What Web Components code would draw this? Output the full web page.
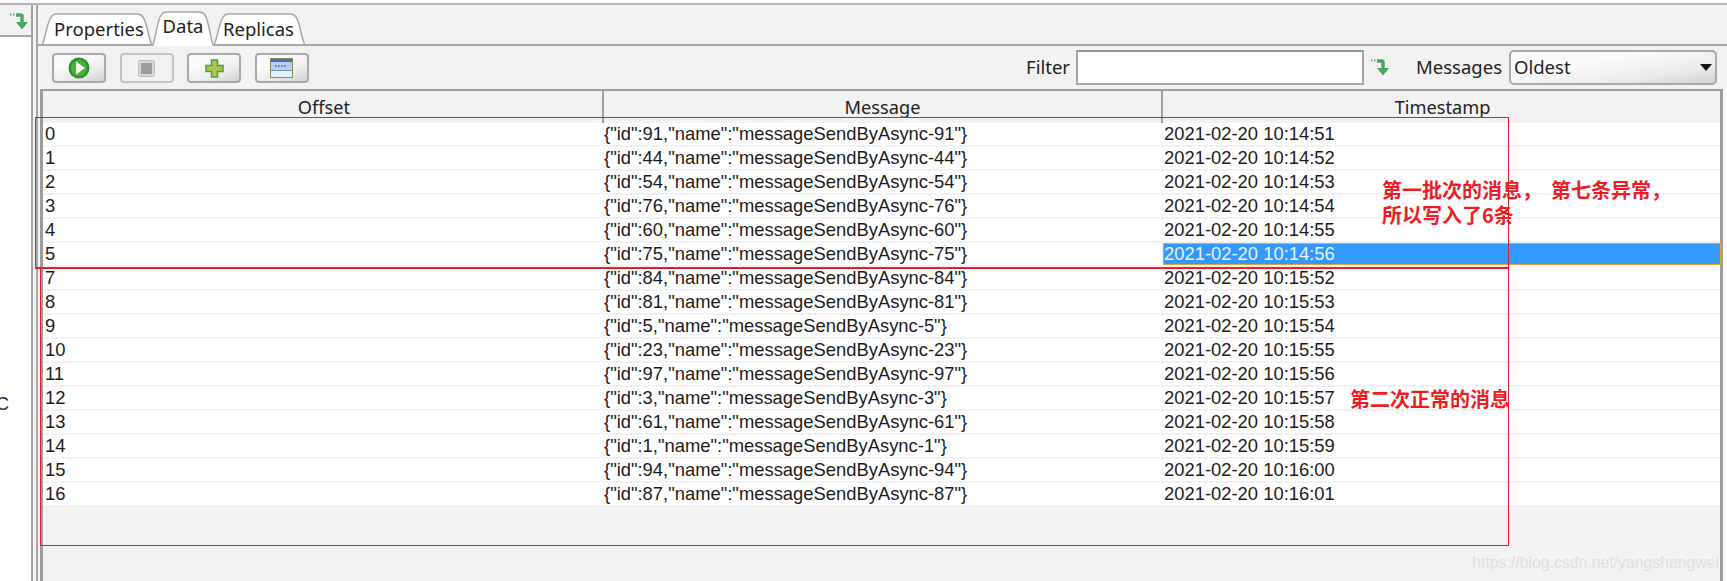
<!DOCTYPE html>
<html lang="zh">
<head>
<meta charset="utf-8">
<title>Data</title>
<style>
  html, body { margin: 0; padding: 0; background: #f2f2f2; overflow: hidden; }
</style>
</head>
<body>
<app-shell>
  <side-panel slot="side">C</side-panel>
  <tab-strip slot="main">
    <tab-item width="110" shift="2">Properties</tab-item>
    <tab-item width="62" active>Data</tab-item>
    <tab-item width="91" shift="-1">Replicas</tab-item>
  </tab-strip>
  <tool-bar slot="main">
    <tool-button icon="play"></tool-button>
    <tool-button icon="stop" disabled></tool-button>
    <tool-button icon="plus"></tool-button>
    <tool-button icon="window"></tool-button>
    <filter-field slot="right"></filter-field>
  </tool-bar>
  <data-table slot="main"></data-table>
  <red-box slot="over" style="left:35px;top:117px;width:1472px;height:149px;border-bottom:2px solid #ee1c25"></red-box>
  <red-box slot="over" style="left:40px;top:268px;width:1467px;height:277px;border-top:0"></red-box>
  <red-note slot="over" style="left:1382px;top:177px;font-size:20px">第一批次的消息，&nbsp; 第七条异常，<br>所以写入了6条</red-note>
  <red-note slot="over" style="left:1350px;top:386px;font-size:20px">第二次正常的消息</red-note>
  <water-mark slot="over">https://blog.csdn.net/yangshangwei</water-mark>
</app-shell>

<script>
const UI_FONT = "'Noto Sans', 'Open Sans', sans-serif";

const ARROW = `
  <svg width="18" height="17" viewBox="0 0 18 17">
    <path d="M0 1.500h1.600M3 1.500h1.600" stroke="#5fb878" stroke-width="2" fill="none"/>
    <path d="M6 2h4.500q1.500 0 1.500 1.500V10" stroke="#4aa564" stroke-width="3.500" fill="none"/>
    <path d="M6 9h12L12 16.500z" fill="#4aa564"/>
  </svg>`;

const ICONS = {
  play: `<svg width="22" height="22" viewBox="0 0 22 22">
    <circle cx="11" cy="11" r="10.500" fill="#2f8f2f"/>
    <circle cx="11" cy="11" r="8" fill="#4caf3f"/>
    <path d="M8 4.500L17 11L8 17.500z" fill="#f4f8ee"/>
  </svg>`,
  stop: `<svg width="17" height="17" viewBox="0 0 17 17">
    <rect x="0.500" y="0.500" width="16" height="16" rx="1" fill="#d8d8d8" stroke="#bdbdbd"/>
    <rect x="3" y="3" width="11" height="11" fill="#9c9c9c"/>
  </svg>`,
  plus: `<svg width="19" height="19" viewBox="0 0 19 19">
    <path d="M6.500 1h6v5.500H18v6h-5.500V18h-6v-5.500H1v-6h5.500z" fill="#a9c94a" stroke="#4f9a45" stroke-width="1.500"/>
  </svg>`,
  window: `<svg width="23" height="20" viewBox="0 0 23 20">
    <rect x="0.500" y="0.500" width="22" height="19" fill="#e4f0fb" stroke="#8c8a5e"/>
    <rect x="1" y="1" width="21" height="3" fill="#3f72b5"/>
    <rect x="1" y="4" width="21" height="8" fill="#b9cdea"/>
    <path d="M5 8h1.500M8 8h1.500M11 8h1.500M14 8h1.500" stroke="#3f5f95" stroke-width="1.500"/>
    <rect x="1" y="12" width="21" height="1" fill="#6f8fbf"/>
  </svg>`
};

class AppShell extends HTMLElement {
  constructor() {
    super();
    this.attachShadow({ mode: 'open' });
    this.shadowRoot.innerHTML = `
      <style>
        :host {
          display: block;
          position: relative;
          width: 1727px;
          height: 581px;
          overflow: hidden;
          background: #f2f2f2;
          color: #1c1c1c;
        }
        .top { height: 3px; background: #fafafa; border-bottom: 2px solid #b4b4b4; }
        .body { display: flex; height: 576px; }
        .side { width: 33px; flex: none; display: flex; }
        .main {
          margin-left: 3px;
          flex: 1;
          min-width: 0;
          border-left: 2px solid #a6a6a6;
          display: flex;
          flex-direction: column;
        }
      </style>
      <div class="top"></div>
      <div class="body">
        <div class="side"><slot name="side"></slot></div>
        <div class="main"><slot name="main"></slot></div>
      </div>
      <slot name="over"></slot>
    `;
  }
}
customElements.define('app-shell', AppShell);

class SidePanel extends HTMLElement {
  constructor() {
    super();
    this.attachShadow({ mode: 'open' });
    this.shadowRoot.innerHTML = `
      <style>
        :host {
          display: flex;
          flex-direction: column;
          width: 31px;
          border-right: 2px solid #a0a0a0;
          overflow: hidden;
        }
        .head {
          height: 32px;
          box-sizing: border-box;
          padding: 8px 0 0 10px;
          border-bottom: 2px solid #a8a8a8;
          flex: none;
        }
        .tree {
          flex: 1;
          background: #fff;
          padding-top: 356px;
          font: 18px/22px 'Liberation Sans', sans-serif;
        }
        .tree span { margin-left: -4px; color: #1f3550; }
      </style>
      <div class="head">${ARROW}</div>
      <div class="tree"><span><slot></slot></span></div>
    `;
  }
}
customElements.define('side-panel', SidePanel);

class TabStrip extends HTMLElement {
  constructor() {
    super();
    this.attachShadow({ mode: 'open' });
    this.shadowRoot.innerHTML = `
      <style>
        :host {
          display: flex;
          align-items: flex-end;
          height: 41px;
          box-sizing: border-box;
          padding-left: 4px;
          border-bottom: 2px solid #a8a8a8;
        }
      </style>
      <slot></slot>
    `;
  }
}
customElements.define('tab-strip', TabStrip);

class TabItem extends HTMLElement {
  constructor() {
    super();
    this.attachShadow({ mode: 'open' });
    const w = Number(this.getAttribute('width'));
    const on = this.hasAttribute('active');
    const shift = Number(this.getAttribute('shift') || 0);
    const h = on ? 35 : 31;
    this.shadowRoot.innerHTML = `
      <style>
        :host {
          display: block;
          position: relative;
          width: ${w}px;
          height: ${h}px;
          margin-bottom: ${on ? -2 : 0}px;
          font: 18.500px/1 ${UI_FONT};
          color: #222;
          z-index: ${on ? 1 : 0};
        }
        svg { position: absolute; left: 0; top: 0; }
        span {
          position: relative;
          display: block;
          text-align: center;
          padding-top: ${on ? 6 : 7}px;
          margin-left: ${shift * 2}px;
        }
      </style>
      <svg width="${w}" height="${h}" viewBox="0 0 ${w} ${h}">
        <path d="M0.500 ${h}C4 ${h - 8} 5 8 10 3Q11 1 15 1H${w - 15}Q${w - 11} 1 ${w - 9} 4C${w - 5} 10 ${w - 4} ${h - 8} ${w - 0.5} ${h}"
              fill="#fff" stroke="#a8a8a8" stroke-width="1.500"/>
      </svg>
      <span><slot></slot></span>
    `;
  }
}
customElements.define('tab-item', TabItem);

class ToolBar extends HTMLElement {
  constructor() {
    super();
    this.attachShadow({ mode: 'open' });
    this.shadowRoot.innerHTML = `
      <style>
        :host {
          display: flex;
          align-items: flex-start;
          height: 43px;
          box-sizing: border-box;
          padding: 4px 10px 0 14px;
          flex: none;
        }
        .left { display: flex; gap: 13.500px; padding-top: 3px; }
        .right { margin-left: auto; }
      </style>
      <div class="left"><slot></slot></div>
      <div class="right"><slot name="right"></slot></div>
    `;
  }
}
customElements.define('tool-bar', ToolBar);

class ToolButton extends HTMLElement {
  constructor() {
    super();
    this.attachShadow({ mode: 'open' });
    const off = this.hasAttribute('disabled');
    this.shadowRoot.innerHTML = `
      <style>
        :host {
          display: flex;
          align-items: center;
          justify-content: center;
          width: 54px;
          height: 30px;
          box-sizing: border-box;
          border: 2px solid ${off ? '#c6c6c6' : '#a9a9a9'};
          border-radius: 4px;
          background: ${off ? '#f2f2f2' : 'linear-gradient(160deg, #fafafa 30%, #ececec 65%, #d2d2d2)'};
        }
        svg { display: block; }
      </style>
      ${ICONS[this.getAttribute('icon')]}
    `;
  }
}
customElements.define('tool-button', ToolButton);

class FilterField extends HTMLElement {
  constructor() {
    super();
    this.attachShadow({ mode: 'open' });
    this.shadowRoot.innerHTML = `
      <style>
        :host {
          display: flex;
          align-items: center;
          height: 35px;
          font: 18.500px/1 ${UI_FONT};
          color: #222;
        }
        .input {
          width: 288px;
          height: 35px;
          box-sizing: border-box;
          margin-left: 6px;
          background: #fff;
          border: 2px solid #a6a6a6;
          border-top-color: #909090;
        }
        .arrow { margin: 0 27px 0 7px; display: flex; }
        .select {
          width: 208px;
          height: 35px;
          box-sizing: border-box;
          margin-left: 7px;
          padding-left: 3px;
          display: flex;
          align-items: center;
          justify-content: space-between;
          border: 2px solid #a9a9a9;
          border-radius: 5px;
          background: linear-gradient(170deg, #fafafa 35%, #ececec 70%, #d4d4d4);
        }
        .caret {
          width: 0;
          height: 0;
          margin-right: 3px;
          border-left: 6px solid transparent;
          border-right: 6px solid transparent;
          border-top: 7px solid #111;
        }
      </style>
      <span>Filter</span>
      <div class="input"></div>
      <div class="arrow">${ARROW}</div>
      <span>Messages</span>
      <div class="select"><span>Oldest</span><i class="caret"></i></div>
    `;
  }
}
customElements.define('filter-field', FilterField);

const ROWS = [
  [0, 91, '10:14:51'], [1, 44, '10:14:52'], [2, 54, '10:14:53'], [3, 76, '10:14:54'],
  [4, 60, '10:14:55'], [5, 75, '10:14:56'], [7, 84, '10:15:52'], [8, 81, '10:15:53'],
  [9, 5, '10:15:54'], [10, 23, '10:15:55'], [11, 97, '10:15:56'], [12, 3, '10:15:57'],
  [13, 61, '10:15:58'], [14, 1, '10:15:59'], [15, 94, '10:16:00'], [16, 87, '10:16:01']
];

class DataTable extends HTMLElement {
  constructor() {
    super();
    this.attachShadow({ mode: 'open' });
    const body = ROWS.map(([offset, id, time]) => `
      <div class="row">
        <div class="cell first">${offset}</div>
        <div class="cell">{"id":${id},"name":"messageSendByAsync-${id}"}</div>
        <div class="cell last ${offset === 5 ? 'sel' : ''}">2021-02-20 ${time}</div>
      </div>`).join('');
    this.shadowRoot.innerHTML = `
      <style>
        :host {
          display: block;
          flex: 1;
          margin: 0 4px 0 2px;
          border: solid #9c9c9c;
          border-width: 2px 3px 0;
          box-shadow: 4px 0 0 #fbfbfb;
          font: 18.400px/22px 'Liberation Sans', sans-serif;
          color: #1c1c1c;
          box-sizing: border-box;
        }
        .row { display: grid; grid-template-columns: 561px 559px 1fr; }
        .head {
          display: grid;
          grid-template-columns: 559px 559px 1fr;
          height: 30px;
          font: 18.200px/32px ${UI_FONT};
          color: #222;
          text-align: center;
        }
        .head div + div { border-left: 2px solid #a0a0a0; }
        .head div:first-child { padding-left: 3px; }
        .head div:last-child { padding-left: 2px; }
        .row { height: 24px; box-sizing: border-box; border-top: 2px solid #f2f2f2; background: #fff; }
        .row:first-of-type { border-top-color: #a0a0a0; }
        .cell { white-space: nowrap; padding-left: 0; }
        .cell + .cell { border-left: 1px solid #f6f6f6; margin-left: -1px; }
        .first { padding-left: 2px; }
        .last { padding-left: 1px; margin-right: -1px; }
        .sel {
          background: #3399ff;
          color: #e6f2ff;
          box-shadow: inset 0 0 0 1px #e2a63c;
          border-left: 0;
          margin-left: 0;
        }
      </style>
      <div class="head"><div>Offset</div><div>Message</div><div>Timestamp</div></div>
      ${body}
    `;
  }
}
customElements.define('data-table', DataTable);

class RedBox extends HTMLElement {
  constructor() {
    super();
    this.attachShadow({ mode: 'open' });
    this.shadowRoot.innerHTML = `
      <style>
        :host {
          position: absolute;
          display: block;
          border: 1px solid #d8202c;
        }
      </style>
    `;
  }
}
customElements.define('red-box', RedBox);

class RedNote extends HTMLElement {
  constructor() {
    super();
    this.attachShadow({ mode: 'open' });
    this.shadowRoot.innerHTML = `
      <style>
        :host {
          position: absolute;
          display: block;
          white-space: nowrap;
          color: #ee1c25;
          font-family: 'Noto Sans CJK SC', sans-serif;
          font-weight: 700;
          line-height: 25px;
        }
      </style>
      <slot></slot>
    `;
  }
}
customElements.define('red-note', RedNote);

class WaterMark extends HTMLElement {
  constructor() {
    super();
    this.attachShadow({ mode: 'open' });
    this.shadowRoot.innerHTML = `
      <style>
        :host {
          position: absolute;
          display: block;
          right: 8px;
          top: 552px;
          color: #dedede;
          font: 15.800px/22px 'Liberation Sans', sans-serif;
        }
      </style>
      <slot></slot>
    `;
  }
}
customElements.define('water-mark', WaterMark);
</script>
</body>
</html>
